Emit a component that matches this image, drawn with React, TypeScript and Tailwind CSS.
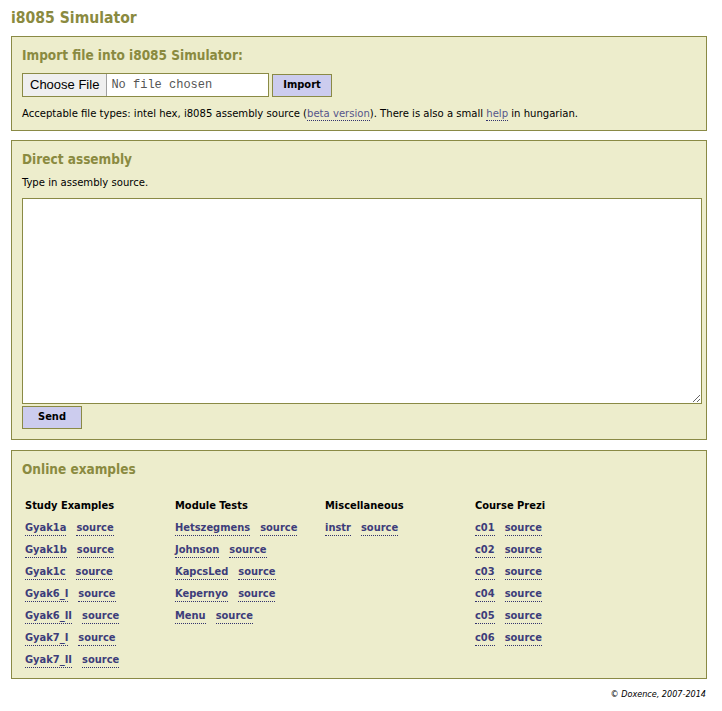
import React from "react";

const study = ["Gyak1a", "Gyak1b", "Gyak1c", "Gyak6_I", "Gyak6_II", "Gyak7_I", "Gyak7_II"];
const modules = ["Hetszegmens", "Johnson", "KapcsLed", "Kepernyo", "Menu"];
const misc = ["instr"];
const prezi = ["c01", "c02", "c03", "c04", "c05", "c06"];

function ExampleLink({ name }: { name: string }) {
  return (
    <div className="flex h-[22px] items-center gap-[10px]">
      <a href="#" className="border-b border-dotted border-[#33336e] font-bold leading-[14px] text-[#3d3d7a]">
        {name}
      </a>
      <a href="#" className="border-b border-dotted border-[#33336e] font-bold leading-[14px] text-[#3d3d7a]">
        source
      </a>
    </div>
  );
}

function Column({ title, items }: { title: string; items: string[] }) {
  return (
    <div className="flex flex-col">
      <div className="flex h-[22px] items-center font-bold text-black">{title}</div>
      {items.map((it) => (
        <ExampleLink key={it} name={it} />
      ))}
    </div>
  );
}

export default function App() {
  return (
    <div className="min-h-[711px] bg-white pl-[11px] pr-[15px] pt-[8px] font-['DejaVu_Sans_Condensed','DejaVu_Sans',sans-serif] text-[11px] text-black">
      <h1 className="text-[15.6px] font-bold leading-[20px] text-[#8a8a40]">i8085 Simulator</h1>

      <div className="mt-[8px] border border-[#8a8a45] bg-[#ededcc] px-[10px] pt-[9px] pb-[8px]">
        <h2 className="text-[13.5px] font-bold leading-[18px] text-[#8a8a40]">Import file into i8085 Simulator:</h2>
        <div className="mt-[9px] flex items-center gap-[3px]">
          <div className="flex h-[24px] w-[247px] items-center border border-[#8a8a45] bg-white">
            <div className="flex h-[22px] items-center border-r border-[#a0a0a0] bg-[#efefef] px-[7px] font-['Liberation_Sans',Arial,sans-serif] text-[13px] text-black">
              Choose File
            </div>
            <span className="pl-[4px] font-['Liberation_Mono','Courier_New',monospace] text-[12px] text-[#555]">No file chosen</span>
          </div>
          <button className="h-[23px] w-[60px] border border-[#8a8a45] bg-[#ccccee] text-[11px] font-bold text-black">
            Import
          </button>
        </div>
        <p className="mt-[9px] text-[11.2px] leading-[16px]">
          Acceptable file types: intel hex, i8085 assembly source (
          <a href="#" className="border-b border-dotted border-[#33336e] text-[#55558a]">beta version</a>
          ). There is also a small{" "}
          <a href="#" className="border-b border-dotted border-[#33336e] text-[#55558a]">help</a> in hungarian.
        </p>
      </div>

      <div className="mt-[9px] border border-[#8a8a45] bg-[#ededcc] pl-[10px] pr-[4px] pt-[9px] pb-[10px]">
        <h2 className="text-[13.5px] font-bold leading-[18px] text-[#8a8a40]">Direct assembly</h2>
        <p className="mt-[7px] text-[11.2px] leading-[16px]">Type in assembly source.</p>
        <textarea className="mt-[7px] block h-[206px] w-[680px] border border-[#8a8a45] bg-white outline-none" />
        <button className="mt-[2px] h-[23px] w-[60px] border border-[#8a8a45] bg-[#ccccee] text-[11px] font-bold text-black">
          Send
        </button>
      </div>

      <div className="mt-[10px] border border-[#8a8a45] bg-[#ededcc] px-[10px] pt-[9px] pb-[7px]">
        <h2 className="text-[13.5px] font-bold leading-[18px] text-[#8a8a40]">Online examples</h2>
        <div className="mt-[17px] grid grid-cols-[150px_150px_150px_150px] pl-[3px]">
          <Column title="Study Examples" items={study} />
          <Column title="Module Tests" items={modules} />
          <Column title="Miscellaneous" items={misc} />
          <Column title="Course Prezi" items={prezi} />
        </div>
      </div>

      <div className="mt-[8px] pr-[1px] text-right text-[9px] italic leading-[14px] text-black">© Doxence, 2007-2014</div>
    </div>
  );
}
